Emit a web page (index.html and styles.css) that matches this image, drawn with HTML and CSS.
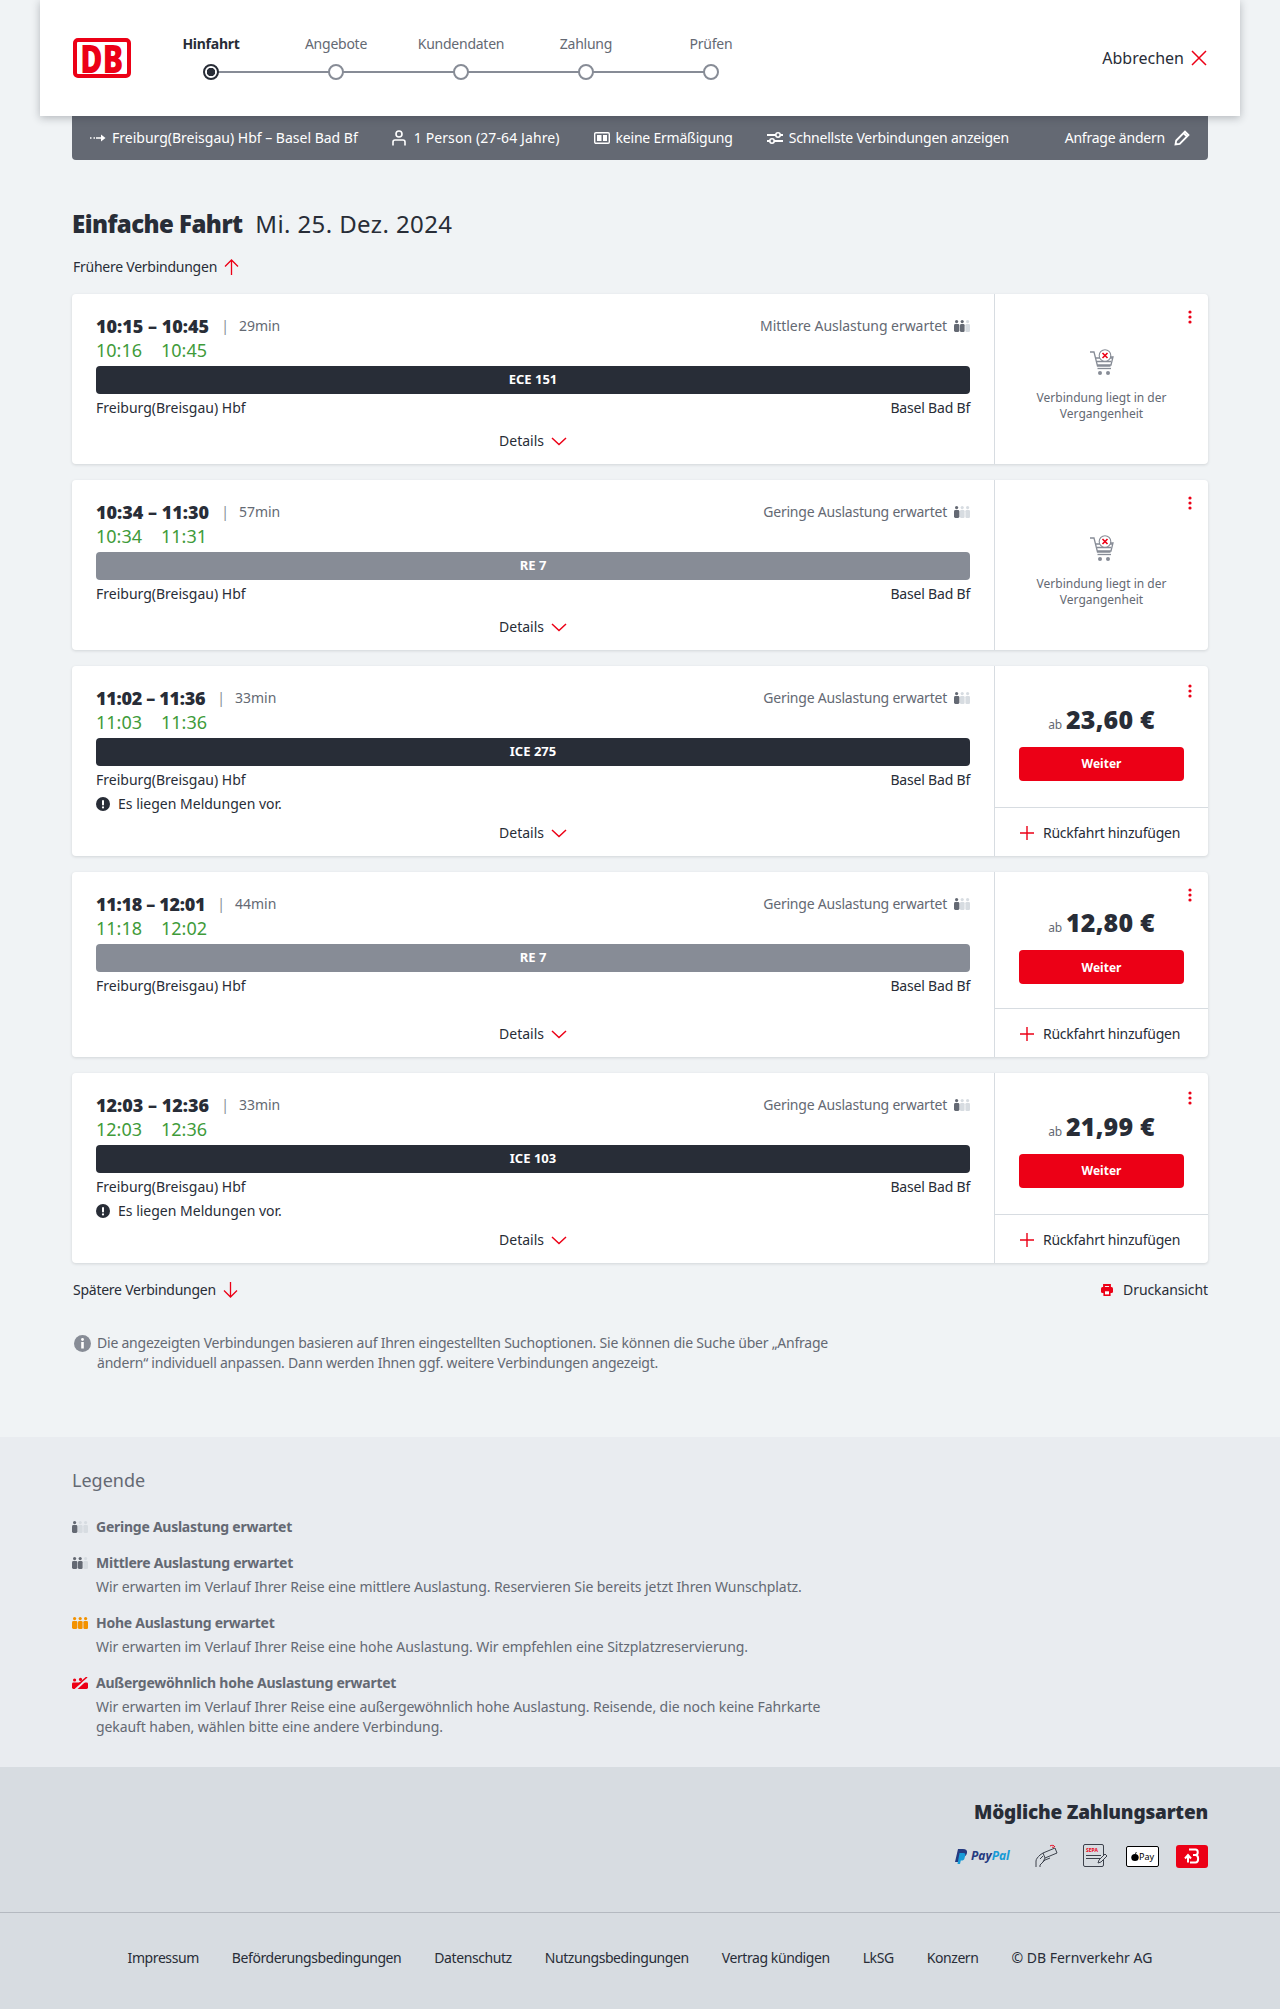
FILE: index.html
```html
<!DOCTYPE html>
<html lang="de">
<head>
  <meta charset="UTF-8" />
  <meta name="viewport" content="width=device-width, initial-scale=1.0"/>
  <title>Angebote | DB</title>
  <link rel="stylesheet" href="styles.css">
</head>
<body>

  <svg class="sprite" aria-hidden="true">
    <symbol id="occ-low" viewBox="0 0 16 12">
      <circle cx="2.6" cy="1.6" r="1.6" fill="#646973"/><rect x="0" y="4" width="5.4" height="8" rx="1.4" fill="#646973"/>
      <circle cx="8.2" cy="1.6" r="1.6" fill="#d7dce1"/><rect x="6" y="4" width="4.6" height="8" rx="1.2" fill="#d7dce1"/>
      <circle cx="13.6" cy="1.6" r="1.6" fill="#d7dce1"/><rect x="11.4" y="4" width="4.6" height="8" rx="1.2" fill="#d7dce1"/>
    </symbol>
    <symbol id="occ-mid" viewBox="0 0 16 12">
      <circle cx="2.6" cy="1.6" r="1.6" fill="#646973"/><rect x="0" y="4" width="5.4" height="8" rx="1.4" fill="#646973"/>
      <circle cx="8.2" cy="1.6" r="1.6" fill="#646973"/><rect x="6" y="4" width="4.6" height="8" rx="1.2" fill="#646973"/>
      <circle cx="13.6" cy="1.6" r="1.6" fill="#d7dce1"/><rect x="11.4" y="4" width="4.6" height="8" rx="1.2" fill="#d7dce1"/>
    </symbol>
    <symbol id="occ-high" viewBox="0 0 16 12">
      <circle cx="2.6" cy="1.6" r="1.6" fill="#f39200"/><rect x="0" y="4" width="5.4" height="8" rx="1.4" fill="#f39200"/>
      <circle cx="8.2" cy="1.6" r="1.6" fill="#f39200"/><rect x="6" y="4" width="4.6" height="8" rx="1.2" fill="#f39200"/>
      <circle cx="13.6" cy="1.6" r="1.6" fill="#f39200"/><rect x="11.4" y="4" width="4.6" height="8" rx="1.2" fill="#f39200"/>
    </symbol>
    <symbol id="occ-full" viewBox="0 0 16 12">
      <circle cx="2.6" cy="3" r="1.6" fill="#ec0016"/><rect x="0" y="5.4" width="16" height="6.6" rx="1.4" fill="#ec0016"/>
      <path d="M3 13 15 2" stroke="#e9ecf0" stroke-width="2" fill="none"/>
      <path d="M5 8.5 15 0" stroke="#ec0016" stroke-width="1.6" fill="none"/>
      <circle cx="8.5" cy="2.4" r="1.6" fill="#ec0016"/>
    </symbol>
    <symbol id="dots" viewBox="0 0 4 14">
      <circle cx="2" cy="2" r="1.6"/><circle cx="2" cy="7" r="1.6"/><circle cx="2" cy="12" r="1.6"/>
    </symbol>
    <symbol id="chevron" viewBox="0 0 16 9">
      <path d="M1 1l7 6.5L15 1" fill="none" stroke="#ec0016" stroke-width="1.5"/>
    </symbol>
    <symbol id="plus" viewBox="0 0 14 14">
      <path d="M7 0v14M0 7h14" stroke="#ec0016" stroke-width="1.4" fill="none"/>
    </symbol>
    <symbol id="warn" viewBox="0 0 14 14">
      <circle cx="7" cy="7" r="7" fill="#282d37"/><rect x="6" y="3" width="2" height="5.4" rx="1" fill="#fff"/><circle cx="7" cy="10.4" r="1.1" fill="#fff"/>
    </symbol>
    <symbol id="cart" viewBox="0 0 26 26">
      <path d="M1 3h4l3.5 14h13M21 8h3l-2 8H8" fill="none" stroke="#878c96" stroke-width="1.3"/>
      <path d="M7 9h16M8 12.5h14" fill="none" stroke="#878c96" stroke-width="1.3"/>
      <path d="M8.5 19.5h13.5" stroke="#878c96" stroke-width="1.3"/>
      <circle cx="11" cy="24" r="2" fill="#878c96"/><circle cx="19" cy="24" r="2" fill="#878c96"/>
      <circle cx="16" cy="6.5" r="5.8" fill="#fff" stroke="#878c96" stroke-width="1.1"/>
      <path d="M13.5 4l5 5M18.5 4l-5 5" stroke="#ec0016" stroke-width="1.6"/>
    </symbol>
  </svg>

  <header class="top-bar">
    <div class="db-logo"><span>DB</span></div>
    <ol class="stepper">
      <li class="step active"><span class="step-label">Hinfahrt</span><i class="step-dot"></i></li>
      <li class="step"><span class="step-label">Angebote</span><i class="step-dot"></i></li>
      <li class="step"><span class="step-label">Kundendaten</span><i class="step-dot"></i></li>
      <li class="step"><span class="step-label">Zahlung</span><i class="step-dot"></i></li>
      <li class="step"><span class="step-label">Prüfen</span><i class="step-dot"></i></li>
    </ol>
    <a class="cancel">Abbrechen
      <svg width="16" height="16" viewBox="0 0 16 16"><path d="M1 1l14 14M15 1L1 15" stroke="#ec0016" stroke-width="1.5" fill="none"/></svg>
    </a>
  </header>

  <main class="page">
    <div class="search-bar">
      <span class="search-item search-route">
        <svg width="16" height="10" viewBox="0 0 16 10"><path d="M0 5h1.5M3.5 5h1.5M6 5h8" stroke="#fff" stroke-width="1.5"/><path d="M11 1.5 15.5 5 11 8.5z" fill="#fff"/></svg>
        Freiburg(Breisgau) Hbf – Basel Bad Bf
      </span>
      <span class="search-item search-person">
        <svg width="14" height="16" viewBox="0 0 14 16"><circle cx="7" cy="4" r="3" fill="none" stroke="#fff" stroke-width="1.6"/><path d="M1 15.5V12a2 2 0 0 1 2-2h8a2 2 0 0 1 2 2v3.5" fill="none" stroke="#fff" stroke-width="1.6"/></svg>
        1 Person (27-64 Jahre)
      </span>
      <span class="search-item">
        <svg width="16" height="12" viewBox="0 0 16 12"><rect x=".7" y=".7" width="14.6" height="10.6" rx="1.2" fill="none" stroke="#fff" stroke-width="1.4"/><rect x="3" y="3" width="4.5" height="6" fill="#fff"/><rect x="9" y="3" width="4" height="6" fill="#fff"/></svg>
        keine Ermäßigung
      </span>
      <span class="search-item">
        <svg width="16" height="14" viewBox="0 0 16 14"><path d="M0 4h16M0 10h16" stroke="#fff" stroke-width="1.8"/><circle cx="11" cy="4" r="2.2" fill="#646973" stroke="#fff" stroke-width="1.6"/><circle cx="5" cy="10" r="2.2" fill="#646973" stroke="#fff" stroke-width="1.6"/></svg>
        Schnellste Verbindungen anzeigen
      </span>
      <span class="search-item search-edit">Anfrage ändern
        <svg width="16" height="16" viewBox="0 0 16 16"><path d="M1.5 14.5l.7-4L11 1.5 14.5 5l-8.8 8.8zM9.5 3 13 6.5" fill="none" stroke="#fff" stroke-width="1.8"/></svg>
      </span>
    </div>

    <h1 class="trip-title"><b>Einfache Fahrt</b> Mi. 25. Dez. 2024</h1>

    <a class="more-link">Frühere Verbindungen
      <svg width="15" height="16" viewBox="0 0 15 16"><path d="M7.5 16V1M1 7.5 7.5 1 14 7.5" stroke="#ec0016" stroke-width="1.3" fill="none"/></svg>
    </a>

    <article class="conn">
      <div class="conn-main">
        <div class="conn-head">
          <span class="times">10:15 – 10:45</span><span class="sep">|</span><span class="dur">29min</span>
          <span class="occ occ-wide">Mittlere Auslastung erwartet <svg width="16" height="12"><use href="#occ-mid"/></svg></span>
        </div>
        <div class="live"><span>10:16</span><span>10:45</span></div>
        <div class="train train-long">ECE 151</div>
        <div class="stations"><span>Freiburg(Breisgau) Hbf</span><span class="dest">Basel Bad Bf</span></div>
        <a class="details">Details <svg width="16" height="9"><use href="#chevron"/></svg></a>
      </div>
      <aside class="conn-side">
        <svg class="menu" width="4" height="14"><use href="#dots"/></svg>
        <div class="past">
          <svg width="26" height="26"><use href="#cart"/></svg>
          <p>Verbindung liegt in der<br>Vergangenheit</p>
        </div>
      </aside>
    </article>

    <article class="conn">
      <div class="conn-main">
        <div class="conn-head">
          <span class="times">10:34 – 11:30</span><span class="sep">|</span><span class="dur">57min</span>
          <span class="occ">Geringe Auslastung erwartet <svg width="16" height="12"><use href="#occ-low"/></svg></span>
        </div>
        <div class="live"><span>10:34</span><span>11:31</span></div>
        <div class="train train-local">RE 7</div>
        <div class="stations"><span>Freiburg(Breisgau) Hbf</span><span class="dest">Basel Bad Bf</span></div>
        <a class="details">Details <svg width="16" height="9"><use href="#chevron"/></svg></a>
      </div>
      <aside class="conn-side">
        <svg class="menu" width="4" height="14"><use href="#dots"/></svg>
        <div class="past">
          <svg width="26" height="26"><use href="#cart"/></svg>
          <p>Verbindung liegt in der<br>Vergangenheit</p>
        </div>
      </aside>
    </article>

    <article class="conn">
      <div class="conn-main">
        <div class="conn-head">
          <span class="times times-narrow">11:02 – 11:36</span><span class="sep">|</span><span class="dur">33min</span>
          <span class="occ">Geringe Auslastung erwartet <svg width="16" height="12"><use href="#occ-low"/></svg></span>
        </div>
        <div class="live"><span>11:03</span><span>11:36</span></div>
        <div class="train train-long">ICE 275</div>
        <div class="stations"><span>Freiburg(Breisgau) Hbf</span><span class="dest">Basel Bad Bf</span></div>
        <div class="notice"><svg width="14" height="14"><use href="#warn"/></svg> Es liegen Meldungen vor.</div>
        <a class="details">Details <svg width="16" height="9"><use href="#chevron"/></svg></a>
      </div>
      <aside class="conn-side">
        <svg class="menu menu-low" width="4" height="14"><use href="#dots"/></svg>
        <div class="offer">
          <div class="price"><small>ab</small> 23,60 €</div>
          <button class="next">Weiter</button>
        </div>
        <a class="add-return"><svg width="14" height="14"><use href="#plus"/></svg> Rückfahrt hinzufügen</a>
      </aside>
    </article>

    <article class="conn">
      <div class="conn-main">
        <div class="conn-head">
          <span class="times times-narrow">11:18 – 12:01</span><span class="sep">|</span><span class="dur">44min</span>
          <span class="occ">Geringe Auslastung erwartet <svg width="16" height="12"><use href="#occ-low"/></svg></span>
        </div>
        <div class="live"><span>11:18</span><span>12:02</span></div>
        <div class="train train-local">RE 7</div>
        <div class="stations"><span>Freiburg(Breisgau) Hbf</span><span class="dest">Basel Bad Bf</span></div>
        <a class="details">Details <svg width="16" height="9"><use href="#chevron"/></svg></a>
      </div>
      <aside class="conn-side">
        <svg class="menu" width="4" height="14"><use href="#dots"/></svg>
        <div class="offer">
          <div class="price"><small>ab</small> 12,80 €</div>
          <button class="next">Weiter</button>
        </div>
        <a class="add-return"><svg width="14" height="14"><use href="#plus"/></svg> Rückfahrt hinzufügen</a>
      </aside>
    </article>

    <article class="conn">
      <div class="conn-main">
        <div class="conn-head">
          <span class="times">12:03 – 12:36</span><span class="sep">|</span><span class="dur">33min</span>
          <span class="occ">Geringe Auslastung erwartet <svg width="16" height="12"><use href="#occ-low"/></svg></span>
        </div>
        <div class="live"><span>12:03</span><span>12:36</span></div>
        <div class="train train-long">ICE 103</div>
        <div class="stations"><span>Freiburg(Breisgau) Hbf</span><span class="dest">Basel Bad Bf</span></div>
        <div class="notice"><svg width="14" height="14"><use href="#warn"/></svg> Es liegen Meldungen vor.</div>
        <a class="details">Details <svg width="16" height="9"><use href="#chevron"/></svg></a>
      </div>
      <aside class="conn-side">
        <svg class="menu menu-low" width="4" height="14"><use href="#dots"/></svg>
        <div class="offer">
          <div class="price"><small>ab</small> 21,99 €</div>
          <button class="next">Weiter</button>
        </div>
        <a class="add-return"><svg width="14" height="14"><use href="#plus"/></svg> Rückfahrt hinzufügen</a>
      </aside>
    </article>

    <div class="after-list">
      <a class="more-link">Spätere Verbindungen
        <svg width="15" height="16" viewBox="0 0 15 16"><path d="M7.5 0v15M1 8.5 7.5 15 14 8.5" stroke="#ec0016" stroke-width="1.3" fill="none"/></svg>
      </a>
      <a class="print">
        <svg width="12" height="12" viewBox="0 0 12 12"><path d="M3 4V1h6v3" fill="none" stroke="#ec0016" stroke-width="1.8"/><rect x="0" y="3" width="12" height="6" rx="1.5" fill="#ec0016"/><rect x="3.2" y="6.5" width="5.6" height="4.7" fill="#fff" stroke="#ec0016" stroke-width="1.6"/></svg>
        Druckansicht
      </a>
    </div>

    <div class="hint">
      <svg width="17" height="17" viewBox="0 0 17 17"><circle cx="8.5" cy="8.5" r="8.5" fill="#878c96"/><circle cx="8.5" cy="4.5" r="1.4" fill="#fff"/><rect x="7.2" y="7" width="2.6" height="6.5" fill="#fff"/></svg>
      <p>Die angezeigten Verbindungen basieren auf Ihren eingestellten Suchoptionen. Sie können die Suche über „Anfrage ändern“ individuell anpassen. Dann werden Ihnen ggf. weitere Verbindungen angezeigt.</p>
    </div>
  </main>

  <section class="legend">
    <div class="legend-inner">
      <h2>Legende</h2>
      <div class="legend-item">
        <svg width="16" height="12"><use href="#occ-low"/></svg>
        <div><strong>Geringe Auslastung erwartet</strong></div>
      </div>
      <div class="legend-item">
        <svg width="16" height="12"><use href="#occ-mid"/></svg>
        <div><strong>Mittlere Auslastung erwartet</strong>
          <p>Wir erwarten im Verlauf Ihrer Reise eine mittlere Auslastung. Reservieren Sie bereits jetzt Ihren Wunschplatz.</p></div>
      </div>
      <div class="legend-item">
        <svg width="16" height="12"><use href="#occ-high"/></svg>
        <div><strong>Hohe Auslastung erwartet</strong>
          <p>Wir erwarten im Verlauf Ihrer Reise eine hohe Auslastung. Wir empfehlen eine Sitzplatzreservierung.</p></div>
      </div>
      <div class="legend-item">
        <svg width="16" height="12"><use href="#occ-full"/></svg>
        <div><strong>Außergewöhnlich hohe Auslastung erwartet</strong>
          <p>Wir erwarten im Verlauf Ihrer Reise eine außergewöhnlich hohe Auslastung. Reisende, die noch keine Fahrkarte gekauft haben, wählen bitte eine andere Verbindung.</p></div>
      </div>
    </div>
  </section>

  <section class="payment">
    <h2>Mögliche Zahlungsarten</h2>
    <div class="pay-icons">
      <span class="pay-paypal">
        <svg width="13" height="15" viewBox="0 0 13 15"><path d="M3 0h5c3 0 4.5 1.5 4 4-.5 2.5-2.5 4-5 4H5l-1 5H0z" fill="#253b80"/><path d="M4.5 4h4c1.5 0 2 .8 1.8 2L9.500 9.500c-.3 1.500-1.500 2-3 2H5.800L5 15H2.500z" fill="#179bd7"/></svg>
        <b class="pp-a">Pay</b><b class="pp-b">Pal</b>
      </span>
      <svg class="pay-nfc" width="24" height="24" viewBox="0 0 24 24"><g fill="none" stroke="#3c414b" stroke-width="1"><path d="M9 9l12-5 2 5-12 5z"/><path d="M2 23v-6c0-2 2-4 4-6l3-2"/><path d="M6 23v-2l5-5 5-2"/><path d="M11 14l-2 4M6 15l3-3"/></g><path d="M16 2c1.5-1 4-1 5 1M18 3.500c.7-.4 1.500-.2 2 .4" fill="none" stroke="#ec0016" stroke-width="1"/></svg>
      <span class="pay-sepa">
        <span class="sepa-sheet"><b>SEPA</b><i></i><i></i></span>
        <svg class="sepa-pen" width="12" height="12" viewBox="0 0 12 12"><path d="M1 11l1-3 6-6 2 2-6 6z" fill="#d7dce1" stroke="#3c414b"/></svg>
      </span>
      <span class="pay-apple"><svg width="8" height="9" viewBox="0 0 8 9"><ellipse cx="4" cy="5.5" rx="3.7" ry="3.5"/><path d="M4 2c0-1 .6-1.7 1.7-2 0 1-.6 1.800-1.700 2z"/></svg>Pay</span>
      <span class="pay-db">
        <svg width="18" height="16" viewBox="0 0 18 16"><path d="M6 1.5h6.5c3 0 3 5.500 0 5.500H10M12.500 7c3.500 0 3.500 7.500 0 7.500H7" fill="none" stroke="#fff" stroke-width="2"/><path d="M2 10.500 5 7l3 3.500M5 8v6.500" fill="none" stroke="#fff" stroke-width="2"/></svg>
      </span>
    </div>
  </section>

  <footer class="site-footer">
    <a>Impressum</a>
    <a>Beförderungsbedingungen</a>
    <a>Datenschutz</a>
    <a>Nutzungsbedingungen</a>
    <a>Vertrag kündigen</a>
    <a>LkSG</a>
    <a>Konzern</a>
    <a class="copyright">© DB Fernverkehr AG</a>
  </footer>

</body>
</html>
```

FILE: styles.css
```css
:root {
  --red: #ec0016;
  --ink: #282d37;
  --grey: #646973;
  --grey-mid: #878c96;
  --line: #d7dce1;
  --bg: #f0f3f5;
}

* {
  box-sizing: border-box;
}

body {
  margin: 0;
  background: var(--bg);
  color: var(--ink);
  font-family: "Noto Sans", sans-serif;
  font-size: 14px;
  line-height: 20px;
}

.sprite {
  display: none;
}

svg {
  flex: none;
}

/* header */
.top-bar {
  position: relative;
  z-index: 2;
  display: flex;
  width: 1200px;
  height: 116px;
  margin: 0 auto;
  padding: 0 33px;
  background: #fff;
  box-shadow: 0 2px 8px rgba(40, 45, 55, 0.3);
}

.db-logo {
  display: flex;
  align-items: center;
  justify-content: center;
  width: 58px;
  height: 40px;
  margin-top: 38px;
  border: 4px solid var(--red);
  border-radius: 5px;
  color: var(--red);
  font-weight: 900;
  font-size: 38px;
  line-height: 32px;
}

.db-logo span {
  display: block;
  transform: scaleX(0.8);
}

.stepper {
  display: flex;
  margin: 34px 0 0 17.5px;
  padding: 0;
  list-style: none;
}

.step {
  position: relative;
  display: flex;
  flex-direction: column;
  align-items: center;
  width: 125px;
  color: var(--grey);
  letter-spacing: -0.25px;
}

.step.active {
  color: var(--ink);
  font-weight: 700;
}

.step-dot {
  position: relative;
  z-index: 1;
  width: 16px;
  height: 16px;
  margin-top: 10px;
  border: 2px solid var(--grey-mid);
  border-radius: 50%;
  background: #fff;
}

.step:not(:last-child)::after {
  content: "";
  position: absolute;
  top: 37px;
  left: 62.5px;
  width: 125px;
  height: 2px;
  background: var(--grey-mid);
}

.step.active .step-dot {
  border-color: var(--ink);
  background: radial-gradient(circle, var(--ink) 0 4px, #fff 4.5px);
}

.cancel {
  display: flex;
  align-items: center;
  gap: 7px;
  margin-left: auto;
  font-size: 16px;
}

/* search summary */
.page {
  width: 1136px;
  margin: 0 auto;
}

.search-bar {
  display: flex;
  align-items: center;
  gap: 34px;
  height: 44px;
  padding: 0 18px;
  border-radius: 0 0 4px 4px;
  background: var(--grey);
  color: #fff;
  letter-spacing: -0.22px;
}

.search-item {
  display: flex;
  align-items: center;
  gap: 6px;
}

.search-route {
  letter-spacing: 0;
}

.search-person {
  gap: 8px;
  letter-spacing: 0.1px;
}

.search-edit {
  gap: 9px;
  margin-left: auto;
}

.trip-title {
  margin: 49px 0 0;
  font-size: 24px;
  line-height: 30px;
  font-weight: 400;
  letter-spacing: 0.4px;
}

.trip-title b {
  margin-right: 6px;
  font-weight: 900;
  letter-spacing: -0.55px;
}

.more-link {
  display: flex;
  align-items: center;
  gap: 7px;
  margin-left: 1px;
  letter-spacing: -0.25px;
}

.page > .more-link {
  margin-top: 18px;
  margin-bottom: 17px;
}

/* connection cards */
.conn {
  display: flex;
  margin-bottom: 16px;
  border-radius: 4px;
  background: #fff;
  box-shadow: 0 1px 3px rgba(40, 45, 55, 0.15);
}

.conn-main {
  display: flex;
  flex-direction: column;
  flex: 1;
  padding: 20px 24px 11px;
}

.conn-head {
  display: flex;
  align-items: center;
  height: 24px;
}

.times {
  font-size: 18px;
  font-weight: 900;
}

.times-narrow {
  letter-spacing: -0.3px;
}

.sep {
  margin: 0 10px 0 12px;
  color: var(--grey-mid);
}

.dur {
  color: var(--grey);
}

.occ {
  display: flex;
  align-items: center;
  gap: 7px;
  margin-left: auto;
  color: var(--grey);
  letter-spacing: -0.22px;
}

.occ-wide {
  letter-spacing: -0.05px;
}

.live {
  display: flex;
  gap: 19px;
  height: 24px;
  color: #3f9b3a;
  font-size: 18px;
  line-height: 24px;
}

.train {
  height: 28px;
  margin-top: 4px;
  border-radius: 4px;
  color: #fff;
  font-size: 13px;
  font-weight: 700;
  line-height: 27px;
  text-align: center;
}

.train-long {
  background: var(--ink);
}

.train-local {
  background: var(--grey-mid);
}

.stations {
  display: flex;
  justify-content: space-between;
  margin-top: 4px;
  margin-bottom: 4px;
}

.dest {
  letter-spacing: -0.2px;
}

.notice {
  display: flex;
  align-items: center;
  gap: 8px;
}

.details {
  display: flex;
  align-items: center;
  justify-content: center;
  gap: 7px;
  height: 31px;
  margin-top: auto;
  padding-top: 7px;
}

.conn-side {
  position: relative;
  display: flex;
  flex-direction: column;
  width: 214px;
  border-left: 1px solid var(--line);
}

.menu {
  position: absolute;
  top: 16px;
  right: 16px;
  fill: var(--red);
}

.menu-low {
  top: 18px;
}

.past {
  display: flex;
  flex-direction: column;
  align-items: center;
  padding-top: 55px;
  color: var(--grey);
  font-size: 12px;
  line-height: 16px;
  text-align: center;
}

.past p {
  margin: 15px 0 0;
}

.offer {
  display: flex;
  flex-direction: column;
  align-items: center;
  justify-content: center;
  flex: 1;
  padding: 24px;
}

.price {
  height: 54px;
  padding-bottom: 2px;
  font-size: 25px;
  font-weight: 900;
  line-height: 52px;
  letter-spacing: 0.2px;
  white-space: nowrap;
}

.price small {
  margin-right: -3px;
  color: var(--grey);
  font-size: 12px;
  font-weight: 400;
  letter-spacing: 0;
}

.next {
  width: 165px;
  height: 34px;
  border: none;
  border-radius: 4px;
  background: var(--red);
  color: #fff;
  font-family: inherit;
  font-size: 12px;
  font-weight: 700;
}

.add-return {
  display: flex;
  align-items: center;
  gap: 9px;
  height: 49px;
  padding: 2px 0 0 25px;
  border-top: 1px solid var(--line);
  letter-spacing: -0.25px;
}

/* below the list */
.after-list {
  display: flex;
  align-items: center;
  justify-content: space-between;
  margin-top: -1px;
  padding-top: 2px;
}

.print {
  display: flex;
  align-items: center;
  gap: 10px;
  letter-spacing: -0.1px;
}

.hint {
  display: flex;
  gap: 6px;
  width: 770px;
  margin-top: 33px;
  padding-left: 2px;
  color: var(--grey);
  letter-spacing: -0.22px;
}

.hint svg {
  margin-top: 2px;
}

.hint p {
  margin: 0;
}

/* legend */
.legend {
  height: 330px;
  margin-top: 64px;
  background: #e9ecf0;
  color: var(--grey);
}

.legend-inner {
  width: 1136px;
  margin: 0 auto;
  padding-top: 30px;
}

.legend h2 {
  margin: 0 0 24px;
  font-size: 18px;
  font-weight: 400;
  line-height: 26px;
}

.legend-item {
  display: flex;
  gap: 8px;
  width: 790px;
  margin-bottom: 16px;
}

.legend-item svg {
  margin-top: 4px;
}

.legend-item strong {
  display: block;
  letter-spacing: -0.25px;
}

.legend-item p {
  margin: 4px 0 0;
  letter-spacing: -0.08px;
}

/* payment + footer */
.payment {
  height: 146px;
  padding: 32px 72px 0;
  background: var(--line);
  border-bottom: 1px solid #b4b9c0;
}

.payment h2 {
  margin: 0;
  font-size: 19px;
  font-weight: 900;
  line-height: 26px;
  letter-spacing: -0.2px;
  text-align: right;
}

.pay-icons {
  display: flex;
  align-items: center;
  justify-content: flex-end;
  height: 26px;
  margin-top: 18px;
}

.pay-paypal {
  display: flex;
  align-items: center;
  gap: 3px;
  width: 79px;
  font-size: 12px;
  font-style: italic;
}

.pp-a {
  margin-right: -3px;
  color: #253b80;
}

.pp-b {
  color: #179bd7;
}

.pay-nfc {
  margin-right: 25px;
}

.pay-sepa {
  position: relative;
  display: block;
  width: 43px;
  height: 24px;
}

.sepa-sheet {
  display: block;
  width: 21px;
  height: 23px;
  padding: 2px;
  border: 1px solid #3c414b;
  border-radius: 2px;
}

.sepa-sheet b {
  display: block;
  color: var(--red);
  font-size: 5px;
  line-height: 6px;
}

.sepa-sheet i {
  display: block;
  height: 1px;
  margin-top: 2px;
  background: #3c414b;
}

.sepa-pen {
  position: absolute;
  top: 8px;
  left: 14px;
}

.pay-apple {
  display: flex;
  align-items: center;
  justify-content: center;
  width: 33px;
  height: 21px;
  margin-right: 17px;
  border: 1px solid #000;
  border-radius: 2px;
  background: #fff;
  color: #000;
  font-size: 9px;
  line-height: 1;
}

.pay-db {
  display: flex;
  align-items: center;
  justify-content: center;
  width: 32px;
  height: 23px;
  border-radius: 3px;
  background: var(--red);
}

.site-footer {
  display: flex;
  align-items: center;
  justify-content: center;
  gap: 33px;
  height: 97px;
  padding-bottom: 8px;
  background: var(--line);
  letter-spacing: -0.42px;
}

.copyright {
  letter-spacing: 0;
}
```
